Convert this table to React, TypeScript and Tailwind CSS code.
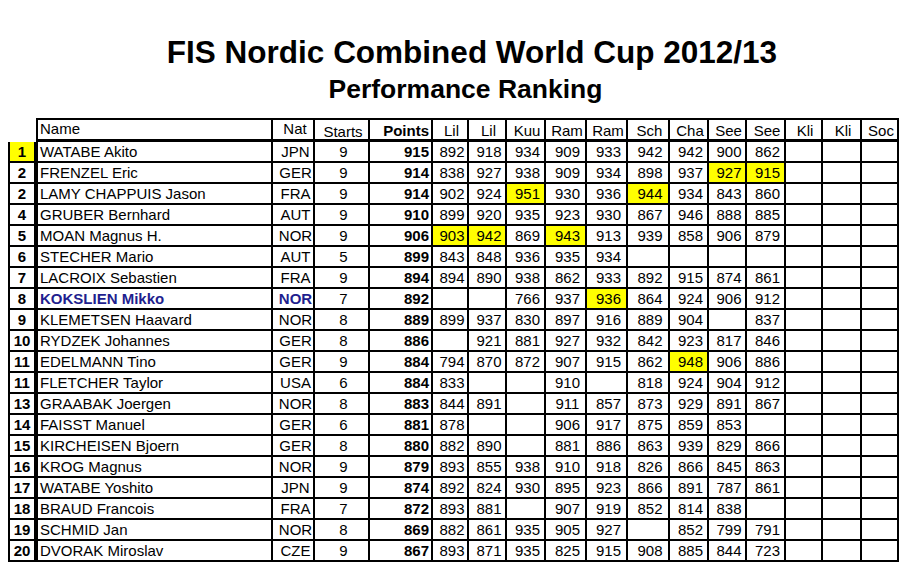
import React from "react";

type Row = {
  rank: string;
  name: string;
  nat: string;
  starts: string;
  points: string;
  s: (string | null)[];
  hl?: number[];
  rankHl?: boolean;
  blue?: boolean;
};

const e = null;

const rows: Row[] = [
  { rank: "1", name: "WATABE Akito", nat: "JPN", starts: "9", points: "915", s: ["892", "918", "934", "909", "933", "942", "942", "900", "862", e, e, e], rankHl: true },
  { rank: "2", name: "FRENZEL Eric", nat: "GER", starts: "9", points: "914", s: ["838", "927", "938", "909", "934", "898", "937", "927", "915", e, e, e], hl: [7, 8] },
  { rank: "2", name: "LAMY CHAPPUIS Jason", nat: "FRA", starts: "9", points: "914", s: ["902", "924", "951", "930", "936", "944", "934", "843", "860", e, e, e], hl: [2, 5] },
  { rank: "4", name: "GRUBER Bernhard", nat: "AUT", starts: "9", points: "910", s: ["899", "920", "935", "923", "930", "867", "946", "888", "885", e, e, e] },
  { rank: "5", name: "MOAN Magnus H.", nat: "NOR", starts: "9", points: "906", s: ["903", "942", "869", "943", "913", "939", "858", "906", "879", e, e, e], hl: [0, 1, 3] },
  { rank: "6", name: "STECHER Mario", nat: "AUT", starts: "5", points: "899", s: ["843", "848", "936", "935", "934", e, e, e, e, e, e, e] },
  { rank: "7", name: "LACROIX Sebastien", nat: "FRA", starts: "9", points: "894", s: ["894", "890", "938", "862", "933", "892", "915", "874", "861", e, e, e] },
  { rank: "8", name: "KOKSLIEN Mikko", nat: "NOR", starts: "7", points: "892", s: [e, e, "766", "937", "936", "864", "924", "906", "912", e, e, e], hl: [4], blue: true },
  { rank: "9", name: "KLEMETSEN Haavard", nat: "NOR", starts: "8", points: "889", s: ["899", "937", "830", "897", "916", "889", "904", e, "837", e, e, e] },
  { rank: "10", name: "RYDZEK Johannes", nat: "GER", starts: "8", points: "886", s: [e, "921", "881", "927", "932", "842", "923", "817", "846", e, e, e] },
  { rank: "11", name: "EDELMANN Tino", nat: "GER", starts: "9", points: "884", s: ["794", "870", "872", "907", "915", "862", "948", "906", "886", e, e, e], hl: [6] },
  { rank: "11", name: "FLETCHER Taylor", nat: "USA", starts: "6", points: "884", s: ["833", e, e, "910", e, "818", "924", "904", "912", e, e, e] },
  { rank: "13", name: "GRAABAK Joergen", nat: "NOR", starts: "8", points: "883", s: ["844", "891", e, "911", "857", "873", "929", "891", "867", e, e, e] },
  { rank: "14", name: "FAISST Manuel", nat: "GER", starts: "6", points: "881", s: ["878", e, e, "906", "917", "875", "859", "853", e, e, e, e] },
  { rank: "15", name: "KIRCHEISEN Bjoern", nat: "GER", starts: "8", points: "880", s: ["882", "890", e, "881", "886", "863", "939", "829", "866", e, e, e] },
  { rank: "16", name: "KROG Magnus", nat: "NOR", starts: "9", points: "879", s: ["893", "855", "938", "910", "918", "826", "866", "845", "863", e, e, e] },
  { rank: "17", name: "WATABE Yoshito", nat: "JPN", starts: "9", points: "874", s: ["892", "824", "930", "895", "923", "866", "891", "787", "861", e, e, e] },
  { rank: "18", name: "BRAUD Francois", nat: "FRA", starts: "7", points: "872", s: ["893", "881", e, "907", "919", "852", "814", "838", e, e, e, e] },
  { rank: "19", name: "SCHMID Jan", nat: "NOR", starts: "8", points: "869", s: ["882", "861", "935", "905", "927", e, "852", "799", "791", e, e, e] },
  { rank: "20", name: "DVORAK Miroslav", nat: "CZE", starts: "9", points: "867", s: ["893", "871", "935", "825", "915", "908", "885", "844", "723", e, e, e] },
];

const heads = ["Lil", "Lil", "Kuu", "Ram", "Ram", "Sch", "Cha", "See", "See", "Kli", "Kli", "Soc"];

const gridCols =
  "grid grid-cols-[28px_237px_42px_55px_63px_36px_38px_39px_41px_41px_42px_39px_38px_39px_37px_39px_37px]";

const hCell = "h-[24px] border-t-2 border-r-2 border-b-[3px] border-black flex leading-none text-[15px] whitespace-nowrap";
const dCell = "h-[21px] border-r-2 border-b-2 border-black flex items-center leading-none text-[15px] whitespace-nowrap";

export default function App() {
  return (
    <div
      className="w-[901px] h-[564px] overflow-hidden bg-white text-black"
      style={{ fontFamily: '"Liberation Sans", Arial, sans-serif' }}
    >
      <div className="pt-[37px] pl-[43px] flex justify-center">
        <div className="text-[31.5px] leading-none font-bold">FIS Nordic Combined World Cup 2012/13</div>
      </div>
      <div className="mt-[7px] pl-[30px] flex justify-center">
        <div className="text-[26.5px] leading-none font-bold">Performance Ranking</div>
      </div>
      <div className={`mt-[16px] ml-[8px] ${gridCols}`}>
        {/* header */}
        <div className="h-[24px]" />
        <div className={`${hCell} border-l-2 items-start pl-[2px] pt-[1px]`}>Name</div>
        <div className={`${hCell} items-start justify-center pl-[4px] pt-[1px]`}>Nat</div>
        <div className={`${hCell} items-center justify-center pl-[3px] pt-[3px]`}>Starts</div>
        <div className={`${hCell} items-center justify-end pr-[2px] pt-[1px] font-bold`}>Points</div>
        {heads.map((h, i) => (
          <div key={i} className={`${hCell} items-center justify-center pl-[3px] pt-[1px]`}>
            {h}
          </div>
        ))}
        {/* rows */}
        {rows.map((r, ri) => (
          <React.Fragment key={ri}>
            <div
              className={`${dCell} border-l-2 border-r-0 justify-center font-bold ${r.rankHl ? "bg-[#ffff00]" : ""}`}
            >
              {r.rank}
            </div>
            <div
              className={`${dCell} border-l-2 pl-[2px] ${r.blue ? "font-bold text-[#1f1f8f]" : ""}`}
            >
              {r.name}
            </div>
            <div className={`${dCell} justify-center pl-[5px] ${r.blue ? "font-bold text-[#1f1f8f]" : ""}`}>
              {r.nat}
            </div>
            <div className={`${dCell} justify-center pl-[4px]`}>{r.starts}</div>
            <div className={`${dCell} justify-end pr-[2px] font-bold`}>{r.points}</div>
            {r.s.map((v, i) => (
              <div
                key={i}
                className={`${dCell} justify-center pl-[4px] ${r.hl && r.hl.includes(i) ? "bg-[#ffff00]" : ""}`}
              >
                {v ?? ""}
              </div>
            ))}
          </React.Fragment>
        ))}
      </div>
    </div>
  );
}
